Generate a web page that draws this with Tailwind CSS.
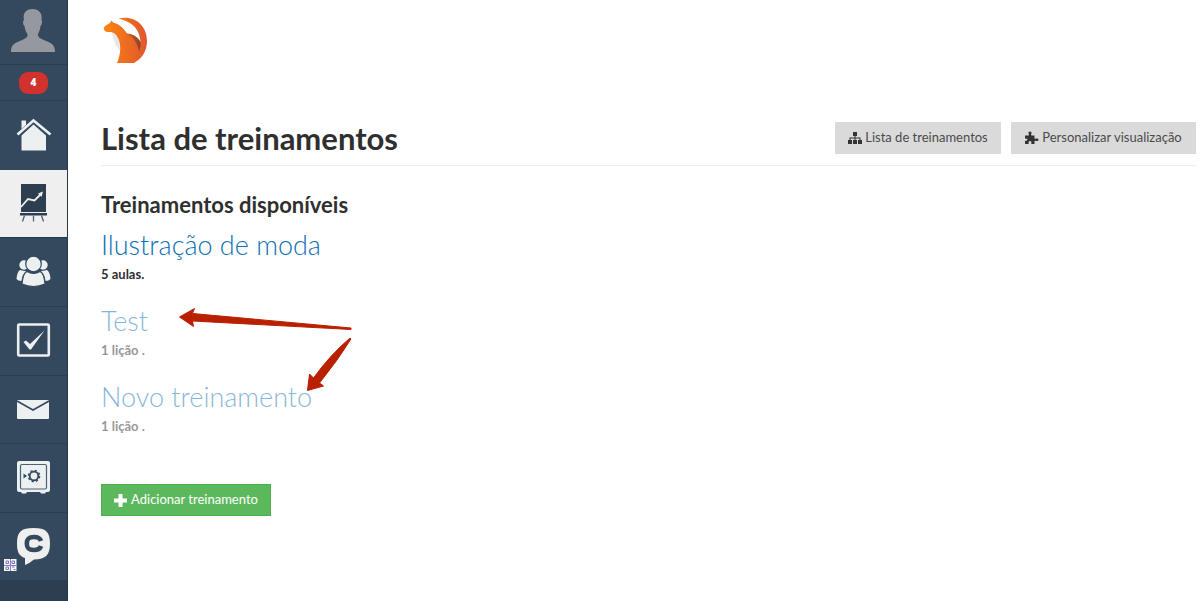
<!DOCTYPE html>
<html lang="pt-BR">
<head>
<meta charset="utf-8">
<title>Lista de treinamentos</title>
<script src="https://cdn.jsdelivr.net/npm/@tailwindcss/browser@4"></script>
</head>
<body class="bg-white font-['Lato','Open_Sans',sans-serif] text-[#2f2f2f]">
<div class="relative flex min-h-screen">
  <nav aria-label="Menu principal" class="flex w-17 shrink-0 flex-col border-r border-[#26394d] bg-[#2d3e50]">
    <a href="#perfil" aria-label="Perfil" class="block h-[65px] border-b border-[#2b3e51] bg-[#34495e]">
      <svg class="block w-full" height="64" viewBox="0 0 67 64"><path fill="#95999f" d="M11 52C11 44 15 43 21 40.500C26 38.500 28 37 27.500 34C25.500 31.500 25 29 24.500 26C23 25 22.500 21 24 20C22.500 13 26 9 32.500 9C39 9 42.500 13 41.500 20C42.500 21 42 25 40.500 26C40 29 39.500 31.500 38 34C37.500 37 40 38.500 45 40.500C51 43 55 44 55 52Z"/></svg>
    </a>
    <a href="#avisos" class="flex h-9 items-center justify-center border-b border-[#2b3e51] bg-[#34495e]"><span class="flex h-[22px] w-[29px] items-center justify-center rounded-[9px] bg-[#d2322d] font-['Open_Sans'] text-[10px] font-extrabold text-white">4</span></a>
    <a href="#inicio" aria-label="Início" class="block h-[69px] bg-[#34495e]">
      <svg class="block w-full" height="69" viewBox="0 101 67 69"><path fill="#ecf0f1" d="M21.500 120.500H26V125L21.500 129ZM21.500 135.500L33.500 124.500L46 135.500V150.500H21.500Z"/><path fill="none" stroke="#ecf0f1" stroke-width="2.600" d="M17.500 134.500L33.500 120.500L50.500 134.500"/></svg>
    </a>
    <a href="#treinamentos" aria-label="Treinamentos" aria-current="page" class="block h-[68px] border-b border-[#26394d] bg-[#efefef]">
      <svg class="block w-full" height="67" viewBox="0 170 67 67"><path fill="#2c3e50" d="M21 184H46V212H21ZM20 213H47V215.500H20Z"/><path fill="none" stroke="#efefef" stroke-width="1.800" d="M21 207L28 199L34.500 200.500L41.500 193.500"/><path fill="#efefef" d="M38 193.500L43 191.500L41.500 197Z"/><path fill="none" stroke="#50606f" stroke-width="1.300" d="M24.500 215.500L22.500 221.500M33.500 215.500V221.500M41.500 215.500L43.500 221.500"/></svg>
    </a>
    <a href="#pessoas" aria-label="Pessoas" class="block h-[69px] border-b border-[#2b3e51] bg-[#34495e]">
      <svg class="block w-full" height="68" viewBox="0 238 67 68"><g fill="#ecf0f1"><circle cx="24" cy="265" r="4.700"/><circle cx="43" cy="265" r="4.700"/><path d="M20 270Q24 271 26 271Q22 275 21.500 281Q18 281 16.500 279Q17 272 20 270ZM47 270Q43 271 41 271Q45 275 45.500 281Q49 281 50.500 279Q50 272 47 270Z"/></g><g fill="#ecf0f1" stroke="#34495e" stroke-width="1.200"><path d="M27 271.500Q33.500 275.500 40 271.500Q44 273 45 284Q33.500 289 22 284Q23 273 27 271.500Z"/><circle cx="33.500" cy="264" r="7.800"/></g></svg>
    </a>
    <a href="#tarefas" aria-label="Tarefas" class="block h-[69px] border-b border-[#2b3e51] bg-[#34495e]">
      <svg class="block w-full" height="68" viewBox="0 307 67 68"><rect x="18.200" y="324.500" width="30.600" height="31" rx="1" fill="none" stroke="#ecf0f1" stroke-width="2.600"/><path fill="#ecf0f1" d="M23.500 342L26 340.500L30 344L44.500 330.500L31 349.500H29.500Z"/></svg>
    </a>
    <a href="#mensagens" aria-label="Mensagens" class="block h-[68px] border-b border-[#2b3e51] bg-[#34495e]">
      <svg class="block w-full" height="67" viewBox="0 376 67 67"><rect x="17" y="400" width="32" height="19" rx="1" fill="#ecf0f1"/><path fill="none" stroke="#34495e" stroke-width="1.600" d="M17 401L33 410L49 401"/></svg>
    </a>
    <a href="#cofre" aria-label="Cofre" class="block h-[69px] border-b border-[#2b3e51] bg-[#34495e]">
      <svg class="block w-full" height="68" viewBox="0 444 67 68"><path fill="#ecf0f1" d="M19 461H48Q50 461 50 463V490Q50 492 48 492H46L45 493.500H41L40 492H27L26 493.500H22L21 492H19Q17 492 17 490V463Q17 461 19 461Z"/><rect x="20.500" y="464.500" width="26" height="24.500" rx="1.500" fill="none" stroke="#4c6075" stroke-width="1.200"/><circle cx="34" cy="476" r="4.300" fill="none" stroke="#34495e" stroke-width="1.800"/><circle cx="34" cy="476" r="5.600" fill="none" stroke="#34495e" stroke-width="1.400" stroke-dasharray="2.200 2.200"/><path fill="#34495e" d="M23.500 473.500L27 476L23.500 478.500Z"/></svg>
    </a>
    <a href="#clube" aria-label="Clube" class="block h-[67px] bg-[#34495e]">
      <svg class="block w-full" height="67" viewBox="0 513 67 67"><path fill="#efefef" d="M33.500 528C46 528 50 532 50 543.500C50 555 46 559 34 559.500Q30 563 25 565V558C19 556 17 552 17 543.500C17 532 21 528 33.500 528Z"/><path fill="none" stroke="#34495e" stroke-width="4.600" d="M41 541C40 537.500 37 537 34 537C28.500 537 26.800 539 26.800 543.500C26.800 548 28.500 550 34 550C37 550 40 549.500 41 546"/><path fill="#f4f5fb" d="M4 559H16.500V571H4Z"/><path fill="none" stroke="#6c7fb0" d="M6 561H8.500V563.500H6ZM12 561H14.500V563.500H12ZM6 567H8.500V569.500H6ZM12 567H14.500M13.500 569.500H15.500"/><path fill="none" stroke="#9a6fd0" d="M10.500 559V571M4 565.500H16.500"/></svg>
    </a>
  </nav>

  <main class="flex min-w-0 grow flex-col pr-1 pl-[33px]">
    <a href="#" aria-label="Página inicial" class="mt-[15px] block w-12">
      <svg class="block" width="48" height="50" viewBox="101 15 48 50">
        <defs><linearGradient id="fur"><stop offset="0" stop-color="#fa8511"/><stop offset="1" stop-color="#e0562f"/></linearGradient><linearGradient id="shade"><stop offset="0" stop-color="#dc6022"/><stop offset="1" stop-color="#8a4029"/></linearGradient></defs>
        <path fill="#e5e6e8" d="M112 32Q114 45 120 51L119 38Z"/>
        <path fill="url(#fur)" d="M118.500 18.500C134 14.500 147 25 147 41C147 52 141 59 134 63H117C121 54 121 45 118.500 39C116 33.500 113 32 109 32C105.500 32.500 103 30 104 27.500C105 25 108 24.500 110 23L111.500 20.500L113 22.500C119 24 123 27.500 127 33.500C133 34.500 137 37 140.500 42C140 30 133 22 118.500 18.500Z"/>
        <path fill="url(#shade)" d="M126.500 33.500C133 34 138 37 140.500 42Q141 47 139 52C138 44 134 38 126.500 33.500Z"/>
      </svg>
    </a>
    <header class="mt-[57px] flex h-11 items-start justify-between border-b border-[#eeeeee]">
      <h1 class="text-[31px] leading-8 font-bold">Lista de treinamentos</h1>
      <div class="flex gap-2.5 text-[13px] text-[#4b4b4b]">
        <button class="flex h-8 w-[166px] items-center justify-center gap-[3px] bg-[#dadada] whitespace-nowrap">
          <svg class="shrink-0" width="14" height="14" viewBox="0 0 14 14"><path fill="#333" d="M5 1H9V5H7.500V6.500H12.500V9H14V13H10V9H11.500V7.500H7.500V9H9V13H5V9H6.500V7.500H2.500V9H4V13H0V9H1.500V6.500H6.500V5H5Z"/></svg>Lista de treinamentos</button>
        <button class="flex h-8 w-[185px] items-center justify-center gap-[3px] bg-[#dadada] whitespace-nowrap">
          <svg class="shrink-0" width="14" height="14" viewBox="0 0 14 14"><path fill="#333" d="M0 4.500H3.500Q4.500 4 3.500 2.500Q3 .500 5 .500Q7 .500 6.500 2.500Q5.500 4 6.500 4.500H9.500V7.500Q10 8 11.500 7.500Q13.500 7 13.500 8.700Q13.500 10.500 11.500 10Q10 9.500 9.500 10V13H6.500Q6 12.500 6.500 11.500Q6.500 10 5 10Q3.500 10 3.500 11.500Q4 12.500 3.500 13H0V10Q2.500 9.500 2.500 8.500Q2.500 7.500 0 7.500Z"/></svg>Personalizar visualização</button>
      </div>
    </header>
    <section>
      <h2 class="mt-[25px] text-[22px] leading-7 font-bold">Treinamentos disponíveis</h2>
      <ul>
        <li class="mt-2 h-[76px]"><a href="#ilustracao" class="block text-[27px] leading-9 font-light text-[#0e70b5]">Ilustração de moda</a><p class="mt-px text-[13px] leading-5 font-bold">5 aulas.</p></li>
        <li class="h-[76px] opacity-50"><a href="#test" class="block text-[27px] leading-9 font-light text-[#0e70b5]">Test</a><p class="mt-px text-[13px] leading-5 font-bold">1 lição .</p></li>
        <li class="h-[76px] opacity-50"><a href="#novo" class="block text-[27px] leading-9 font-light text-[#0e70b5]">Novo treinamento</a><p class="mt-px text-[13px] leading-5 font-bold">1 lição .</p></li>
      </ul>
      <button class="mt-[29px] flex h-8 w-[170px] items-center justify-center gap-1 border border-[#4cae4c] bg-[#5cb85c] text-[13px] whitespace-nowrap text-white">
        <svg class="shrink-0" width="13" height="13" viewBox="0 0 13 13"><path fill="none" stroke="#fff" stroke-width="4" d="M6.500 0V13M0 6.500H13"/></svg>Adicionar treinamento</button>
    </section>
  </main>

  <!-- Arrows pointing at the unpublished trainings -->
  <svg aria-hidden="true" class="pointer-events-none absolute top-[300px] left-[170px]" width="190" height="100" viewBox="170 300 190 100"><path fill="#b92000" stroke="#b92000" stroke-linejoin="round" d="M179.500 317L194.500 308.500L192.500 313.500L351 328L351 329.500L192.500 321L193.500 326.500ZM307.500 390.500L309.500 374L313.500 378Q330 355 350 338L351 339Q338 360 319.500 383L323.500 386Z"/></svg>
</div>
</body>
</html>
